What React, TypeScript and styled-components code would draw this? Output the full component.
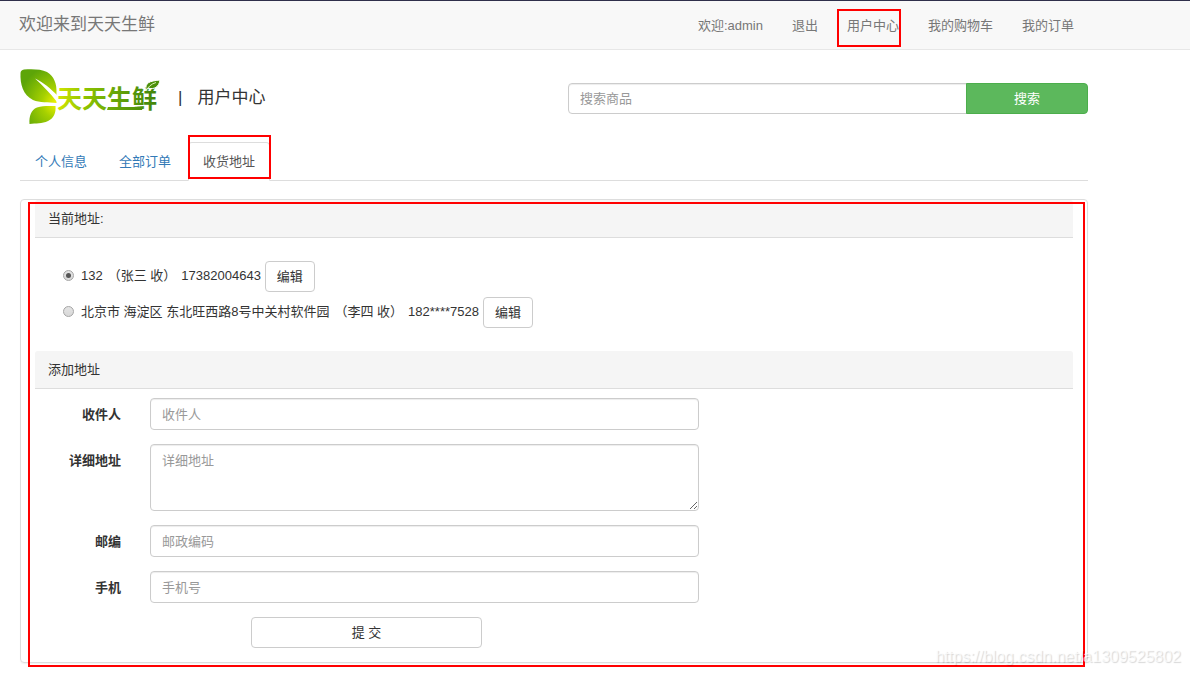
import React from "react";
import styled, { createGlobalStyle, css } from "styled-components";

const GlobalStyle = createGlobalStyle`
  * { box-sizing: border-box; }
  body {
    margin: 0;
    background: #fff;
    color: #333;
    font-family: "Liberation Sans", "Noto Sans CJK SC", sans-serif;
    font-size: 13px;
    line-height: 19px;
  }
  input, textarea, button { font: inherit; color: inherit; }
`;

const Page = styled.div`
  position: relative;
  min-height: 100vh;
`;

const highlight = css`
  content: "";
  position: absolute;
  border: 2px solid #f00;
  pointer-events: none;
`;

const Navbar = styled.header`
  display: flex;
  align-items: center;
  justify-content: space-between;
  height: 50px;
  padding: 0 102px 0 19px;
  background: #f8f8f8;
  border-top: 1px solid #2f2f4b;
  border-bottom: 1px solid #e7e7e7;
`;

const Brand = styled.a`
  color: #777;
  font-size: 17px;
  line-height: 24px;
  text-decoration: none;
`;

const NavLinks = styled.nav`
  display: flex;
  gap: 1px;
`;

const NavLink = styled.a<{ $marked?: boolean }>`
  position: relative;
  padding: 14px;
  color: #777;
  text-decoration: none;
  white-space: nowrap;
  ${(p) =>
    p.$marked &&
    css`
      &::after {
        ${highlight}
        inset: 7px 12px 2px 4px;
      }
    `}
`;

const Main = styled.main`
  padding: 19px 102px 8px 20px;
`;

const Masthead = styled.div`
  display: flex;
  align-items: center;
  height: 58px;
`;

const Logo = styled.svg`
  flex: none;
  display: block;
`;

const LogoText = styled.text`
  font-family: "Noto Sans CJK SC", sans-serif;
  font-size: 25px;
  font-weight: 700;
`;

const Title = styled.h1`
  display: flex;
  gap: 15px;
  margin: 0 auto 0 18px;
  font-size: 17px;
  font-weight: 400;
  line-height: 24px;
  white-space: nowrap;
`;

const SearchForm = styled.form`
  display: flex;
  flex: 0 1 520px;
`;

const field = css`
  display: block;
  width: 100%;
  min-width: 0;
  height: 32px;
  padding: 5px 11px;
  background: #fff;
  border: 1px solid #ccc;
  border-radius: 4px;
  box-shadow: inset 0 1px 1px rgba(0, 0, 0, 0.075);
  &::placeholder {
    color: #999;
    opacity: 1;
  }
`;

const Input = styled.input`
  ${field}
`;

const TextArea = styled.textarea`
  ${field}
  height: 67px;
  padding-top: 6px;
  resize: vertical;
`;

const SearchInput = styled.input`
  ${field}
  height: 31px;
  border-radius: 4px 0 0 4px;
`;

const SearchButton = styled.button`
  flex: 0 0 122px;
  height: 31px;
  margin-left: -1px;
  padding: 0;
  color: #fff;
  background: #5cb85c;
  border: 1px solid #4cae4c;
  border-radius: 0 4px 4px 0;
`;

const Tabs = styled.nav`
  display: flex;
  gap: 2px;
  margin-top: 15px;
  border-bottom: 1px solid #ddd;
`;

const Tab = styled.a<{ $active?: boolean }>`
  position: relative;
  margin-bottom: -1px;
  padding: 9px 14px;
  border: 1px solid transparent;
  color: #337ab7;
  text-decoration: none;
  white-space: nowrap;
  ${(p) =>
    p.$active &&
    css`
      color: #555;
      background: #fff;
      border-color: #ddd #ddd #fff;
      border-radius: 4px 4px 0 0;
      &::after {
        ${highlight}
        inset: -8px -2px 1px -1px;
      }
    `}
`;

const Panel = styled.section`
  position: relative;
  margin-top: 18px;
  padding: 0 14px 14px;
  border: 1px solid #ddd;
  border-radius: 4px;
  box-shadow: 0 1px 1px rgba(0, 0, 0, 0.05);
  &::after {
    ${highlight}
    inset: 2px 2px -5px 7px;
  }
`;

const PanelHeading = styled.h2`
  margin: 0;
  padding: 9px 13px;
  background: #f5f5f5;
  border-bottom: 1px solid #ddd;
  border-radius: 3px 3px 0 0;
  font-size: 13px;
  font-weight: 400;
  line-height: 19px;
`;

const AddressList = styled.div`
  display: flex;
  flex-direction: column;
  gap: 5px;
  padding: 23px 28px;
`;

const AddressRow = styled.div`
  display: flex;
  align-items: center;
  gap: 4px;
`;

const AddressLabel = styled.label`
  display: flex;
  align-items: center;
  gap: 5px;
  padding-bottom: 2px;
`;

const Radio = styled.input`
  appearance: none;
  flex: none;
  display: grid;
  place-items: center;
  width: 11px;
  height: 11px;
  margin: 0 2px 0 0;
  border: 1px solid #a5a5a5;
  border-radius: 50%;
  background: linear-gradient(#e4e4e4, #d8d8d8);
  &:checked::before {
    content: "";
    width: 5px;
    height: 5px;
    border-radius: 50%;
    background: #555;
  }
`;

const Button = styled.button`
  height: 31px;
  padding: 0 11px;
  background: #fff;
  border: 1px solid #ccc;
  border-radius: 4px;
`;

const AddressForm = styled.form`
  display: grid;
  grid-template-columns: 86px minmax(0, 549px);
  gap: 14px 29px;
  padding-top: 9px;
`;

const FormLabel = styled.label`
  padding-top: 7px;
  font-weight: 700;
  text-align: right;
`;

const SubmitButton = styled(Button)`
  grid-column: 2;
  width: 231px;
  margin-left: 101px;
`;

const Watermark = styled.div`
  position: absolute;
  right: 9px;
  bottom: 8px;
  color: rgba(255, 255, 255, 0.7);
  font-size: 16px;
  line-height: 20px;
  text-shadow: 1px 1px 1px rgba(0, 0, 0, 0.16);
  pointer-events: none;
`;

const addresses = [
  { id: "a1", place: "132", receiver: "（张三 收）", phone: "17382004643" },
  {
    id: "a2",
    place: "北京市 海淀区 东北旺西路8号中关村软件园",
    receiver: "（李四 收）",
    phone: "182****7528",
  },
];

function FreshLogo() {
  return (
    <Logo width="140" height="58" viewBox="0 0 140 58" role="img" aria-label="天天生鲜">
      <defs>
        <radialGradient id="leaf" gradientUnits="userSpaceOnUse" cx="37" cy="34" r="38">
          <stop offset="0" stopColor="#f4f500" />
          <stop offset="0.4" stopColor="#a5d000" />
          <stop offset="1" stopColor="#5da508" />
        </radialGradient>
        <linearGradient id="word" gradientUnits="userSpaceOnUse" x1="37" y1="0" x2="140" y2="0">
          <stop offset="0" stopColor="#d3e600" />
          <stop offset="0.3" stopColor="#8ac000" />
          <stop offset="0.65" stopColor="#5d9e08" />
          <stop offset="1" stopColor="#3f820c" />
        </linearGradient>
      </defs>
      <path
        d="M4 .5C12 0 21 0 27 3C34 7 37 15 36.5 24V34C28 33 20 34 13 31C3 26 0 15 .5 4Q.6 1 4 .5Z"
        fill="url(#leaf)"
      />
      <path d="M15 9.500C23 13 31 20 37 26V33C30 24 23 17 15 9.500Z" fill="#fff" />
      <path
        d="M35.500 37C36 44 34 49 28 52C22 55 16 54 9.500 55C9 47 11 41 17 38.500C23 36.500 29 37 35.500 37Z"
        fill="url(#leaf)"
      />
      <LogoText x="37" y="39" fill="url(#word)">天天生鲜</LogoText>
      <path d="M88 38H123L122 41H87Z" fill="url(#word)" />
      <path d="M126 21C125 14 129 12 140 11C139 18 134 21 128 19Z" fill="#4c9009" stroke="#fff" />
      <path d="M126 22C128 18 131 15 136 13.500" fill="none" stroke="#d8edb6" />
    </Logo>
  );
}

export default function App() {
  return (
    <Page>
      <GlobalStyle />
      <Navbar>
        <Brand href="#">欢迎来到天天生鲜</Brand>
        <NavLinks>
          <NavLink href="#">欢迎:admin</NavLink>
          <NavLink href="#">退出</NavLink>
          <NavLink href="#" $marked>用户中心</NavLink>
          <NavLink href="#">我的购物车</NavLink>
          <NavLink href="#">我的订单</NavLink>
        </NavLinks>
      </Navbar>
      <Main>
        <Masthead>
          <FreshLogo />
          <Title>
            <span>|</span>
            <span>用户中心</span>
          </Title>
          <SearchForm>
            <SearchInput type="text" placeholder="搜索商品" aria-label="搜索商品" />
            <SearchButton type="button">搜索</SearchButton>
          </SearchForm>
        </Masthead>
        <Tabs>
          <Tab href="#">个人信息</Tab>
          <Tab href="#">全部订单</Tab>
          <Tab href="#" $active>收货地址</Tab>
        </Tabs>
        <Panel>
          <PanelHeading>当前地址:</PanelHeading>
          <AddressList>
            {addresses.map((a, i) => (
              <AddressRow key={a.id}>
                <AddressLabel htmlFor={a.id}>
                  <Radio type="radio" name="address" id={a.id} defaultChecked={i === 0} />
                  <span>{a.place}</span>
                  <span>{a.receiver}</span>
                  <span>{a.phone}</span>
                </AddressLabel>
                <Button type="button">编辑</Button>
              </AddressRow>
            ))}
          </AddressList>
          <PanelHeading>添加地址</PanelHeading>
          <AddressForm>
            <FormLabel htmlFor="receiver">收件人</FormLabel>
            <Input id="receiver" type="text" placeholder="收件人" />
            <FormLabel htmlFor="detail">详细地址</FormLabel>
            <TextArea id="detail" placeholder="详细地址" />
            <FormLabel htmlFor="zip">邮编</FormLabel>
            <Input id="zip" type="text" placeholder="邮政编码" />
            <FormLabel htmlFor="phone">手机</FormLabel>
            <Input id="phone" type="tel" placeholder="手机号" />
            <SubmitButton type="button">提 交</SubmitButton>
          </AddressForm>
        </Panel>
      </Main>
      <Watermark>https://blog.csdn.net/a1309525802</Watermark>
    </Page>
  );
}
